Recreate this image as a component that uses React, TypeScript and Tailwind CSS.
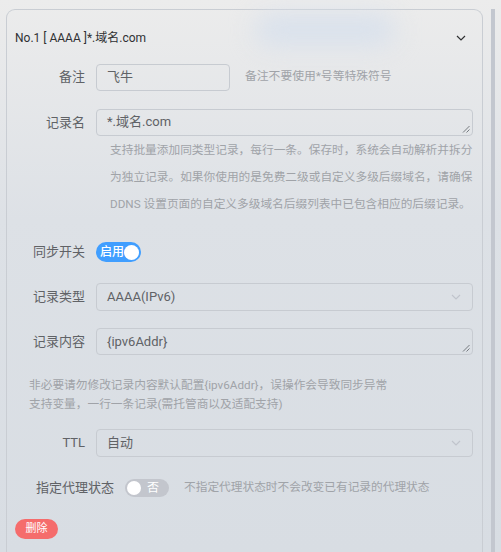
import React from "react";

const font = { fontFamily: 'Roboto, "Noto Sans CJK SC", sans-serif' };

function Chevron({ color = "#c0c4cc", size = 12 }: { color?: string; size?: number }) {
  return (
    <svg width={size} height={size} viewBox="0 0 12 12" fill="none">
      <polyline points="2,4 6,8 10,4" stroke={color} strokeWidth="1.2" fill="none" />
    </svg>
  );
}

function Grip() {
  return (
    <svg width="8" height="8" viewBox="0 0 8 8" className="absolute right-[2px] bottom-[2px]">
      <line x1="7.5" y1="1" x2="1" y2="7.5" stroke="#6b6f75" strokeWidth="0.9" />
      <line x1="7.5" y1="4.5" x2="4.5" y2="7.5" stroke="#6b6f75" strokeWidth="0.9" />
    </svg>
  );
}

function Label({ children }: { children: React.ReactNode }) {
  return (
    <div className="w-[78px] shrink-0 text-right text-[13px] leading-[28px] text-[#606266]">{children}</div>
  );
}

export default function App() {
  return (
    <div
      style={font}
      className="relative flex h-[552px] w-[501px] overflow-hidden bg-linear-to-b from-[#ececec] via-[#dde1e6] via-40% to-[#d8dde3] pl-[6px] pt-[9px]"
    >
      <div className="relative w-[477px] shrink-0 rounded-t-[9px] border border-b-0 border-[#c9cdd3]">
        <div className="absolute left-[248px] top-[4px] h-[32px] w-[140px] rounded-full bg-[#d9e1ec] blur-md" />
        <div className="relative mt-[18px] flex h-[20px] items-center justify-between pl-[8px] pr-[15px]">
          <span className="text-[12px] text-[#303133]">No.1 [ AAAA ]*.域名.com</span>
          <Chevron color="#303133" size={12} />
        </div>

        <div className="relative flex items-center pr-[9px] mt-[15px]">
          <Label>备注</Label>
          <div className="ml-[11px] flex h-[27px] w-[134px] items-center rounded-[4px] border border-[#c7cbd1] px-[10px] text-[13px] text-[#606266]">
            飞牛
          </div>
          <span className="ml-[15px] text-[11.8px] text-[#a0a3a8]">备注不要使用*号等特殊符号</span>
        </div>

        <div className="relative mt-[18px] flex items-start pr-[9px]">
          <Label>记录名</Label>
          <div className="relative ml-[11px] h-[27px] flex-1 rounded-[4px] border border-[#c7cbd1] px-[10px] pt-[3px] text-[13px] leading-[18px] text-[#606266]">
            *.域名.com
            <Grip />
          </div>
        </div>
        <div className="pl-[103px] text-[11.7px] leading-[27px] text-[#a0a3a8]">
          <div className="whitespace-nowrap">支持批量添加同类型记录，每行一条。保存时，系统会自动解析并拆分</div>
          <div className="whitespace-nowrap">为独立记录。如果你使用的是免费二级或自定义多级后缀域名，请确保</div>
          <div className="whitespace-nowrap">DDNS 设置页面的自定义多级域名后缀列表中已包含相应的后缀记录。</div>
        </div>

        <div className="mt-[20px] flex items-center pr-[9px]">
          <Label>同步开关</Label>
          <div className="ml-[11px] flex h-[20px] w-[45px] items-center justify-between rounded-full bg-[#409eff] pl-[4px] pr-[2px]">
            <span className="whitespace-nowrap text-[12px] leading-none font-medium text-white">启用</span>
            <span className="h-[15px] w-[15px] shrink-0 rounded-full bg-white" />
          </div>
        </div>

        <div className="mt-[17px] flex items-center pr-[9px]">
          <Label>记录类型</Label>
          <div className="ml-[11px] flex h-[28px] flex-1 items-center justify-between rounded-[4px] border border-[#c7cbd1] pl-[10px] pr-[10px] text-[13px] text-[#606266]">
            <span>AAAA(IPv6)</span>
            <Chevron />
          </div>
        </div>

        <div className="mt-[17px] flex items-start pr-[9px]">
          <Label>记录内容</Label>
          <div className="relative ml-[11px] h-[27px] flex-1 rounded-[4px] border border-[#c7cbd1] px-[10px] pt-[4px] text-[13px] leading-[18px] text-[#606266]">
            {"{ipv6Addr}"}
            <Grip />
          </div>
        </div>
        <div className="mt-[20px] pl-[22px] text-[11.7px] leading-[19px] text-[#a0a3a8]">
          <div className="whitespace-nowrap">非必要请勿修改记录内容默认配置{"{ipv6Addr}"}，误操作会导致同步异常</div>
          <div className="whitespace-nowrap">支持变量，一行一条记录(需托管商以及适配支持)</div>
        </div>

        <div className="mt-[15px] flex items-center pr-[9px]">
          <Label>TTL</Label>
          <div className="ml-[11px] flex h-[28px] flex-1 items-center justify-between rounded-[4px] border border-[#c7cbd1] pl-[10px] pr-[10px] text-[13px] text-[#606266]">
            <span>自动</span>
            <Chevron />
          </div>
        </div>

        <div className="mt-[17px] flex h-[28px] items-center pl-[29px] pr-[9px]">
          <span className="text-[13px] text-[#606266]">指定代理状态</span>
          <div className="ml-[11px] flex h-[18px] w-[44px] items-center justify-between rounded-full bg-[#c3c6cd] pl-[2px] pr-[10px]">
            <span className="h-[14px] w-[14px] rounded-full bg-white" />
            <span className="text-[12px] leading-none text-white">否</span>
          </div>
          <span className="ml-[15px] text-[11.7px] text-[#a0a3a8]">不指定代理状态时不会改变已有记录的代理状态</span>
        </div>

        <div className="mt-[17px] pl-[8px]">
          <div className="flex h-[20px] w-[43px] items-center justify-center rounded-full bg-[#f56c6c] text-[11px] text-white">
            删除
          </div>
        </div>
      </div>
      <div className="ml-[8px] h-full w-[4px] shrink-0 bg-[#c3c7cf]" />
    </div>
  );
}
